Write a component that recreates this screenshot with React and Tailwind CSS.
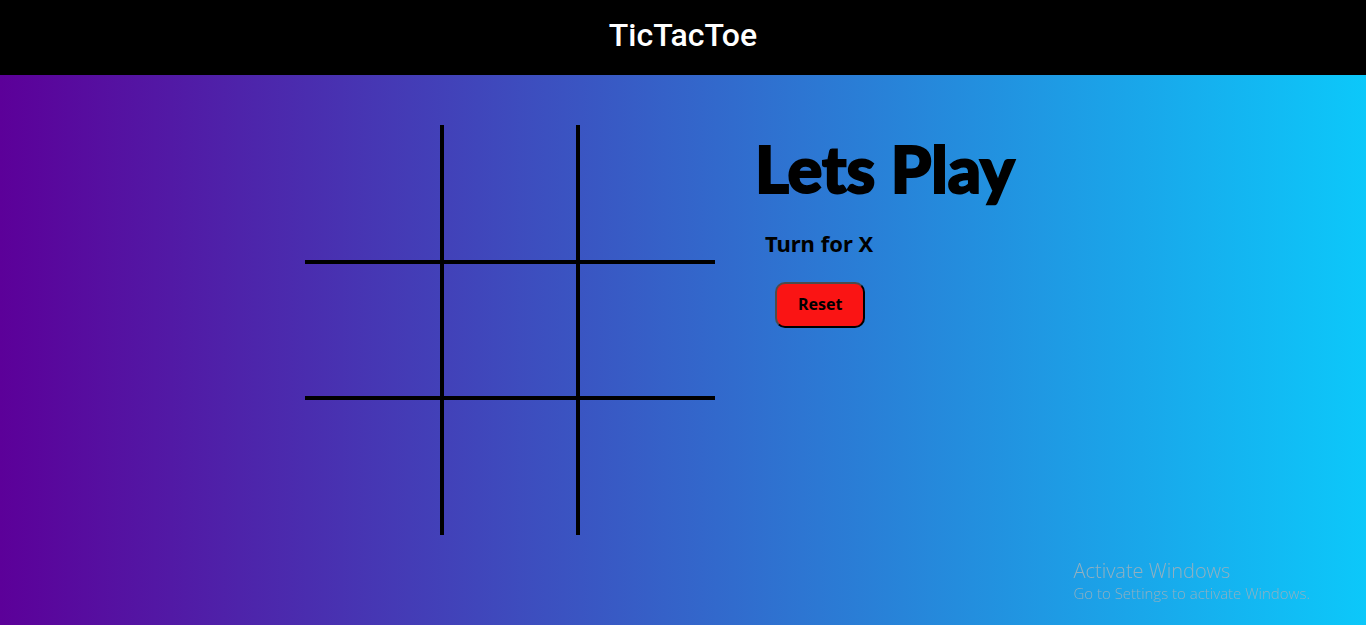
import { useState } from "react";

const CELLS = [
  "border-r-4 border-b-4",
  "border-r-4 border-b-4",
  "border-b-4",
  "border-r-4 border-b-4",
  "border-r-4 border-b-4",
  "border-b-4",
  "border-r-4",
  "border-r-4",
  "",
];

export default function App() {
  const [marks, setMarks] = useState(Array(9).fill(""));
  const turn = marks.filter(Boolean).length % 2 === 0 ? "X" : "O";

  const play = (index) =>
    setMarks(marks.map((mark, i) => (i === index && !mark ? turn : mark)));

  return (
    <div className="flex min-h-screen flex-col bg-linear-to-r/srgb from-[#5c0099] to-[#0cc8fa] text-black">
      <header className="bg-black px-4 pt-[15px] pb-5 text-center text-white">
        <span className="block font-[Roboto,sans-serif] text-[32px] leading-10 font-medium">
          TicTacToe
        </span>
      </header>

      <main className="flex flex-wrap justify-center gap-10 px-4 pt-[50px] pb-10 font-['Noto_Sans',sans-serif]">
        <div className="grid aspect-square w-[30vw] min-w-72 grid-cols-[139px_136px_1fr] grid-rows-[139px_136px_1fr]">
          {CELLS.map((border, i) => (
            <button
              key={i}
              type="button"
              aria-label={`Cell ${i + 1}`}
              onClick={() => play(i)}
              className={`border-black text-6xl font-bold ${border}`}
            >
              {marks[i]}
            </button>
          ))}
        </div>

        <section className="flex w-[306px] flex-col items-start">
          <h1 className="font-[Lato,sans-serif] text-[65px] leading-[86px] font-black whitespace-nowrap [-webkit-text-stroke:2px_black]">
            Lets Play
          </h1>
          <p className="mt-4 ml-[10px] text-[22px] leading-8 font-bold">
            Turn for {turn}
          </p>
          <button
            type="button"
            onClick={() => setMarks(Array(9).fill(""))}
            className="mt-[23px] ml-5 rounded-[10px] border-2 border-t-[#4c4c4c] border-r-black border-b-black border-l-[#4c4c4c] bg-[#fa1414] px-[21px] pt-2 pb-[10px] text-base leading-6 font-bold"
          >
            Reset
          </button>
        </section>
      </main>

      <aside className="pointer-events-none fixed right-14 bottom-[22px] font-['Open_Sans',sans-serif] font-light text-[#92b0c0]">
        <p className="text-[20px] leading-6">Activate Windows</p>
        <p className="text-[15px] leading-5">Go to Settings to activate Windows.</p>
      </aside>
    </div>
  );
}
